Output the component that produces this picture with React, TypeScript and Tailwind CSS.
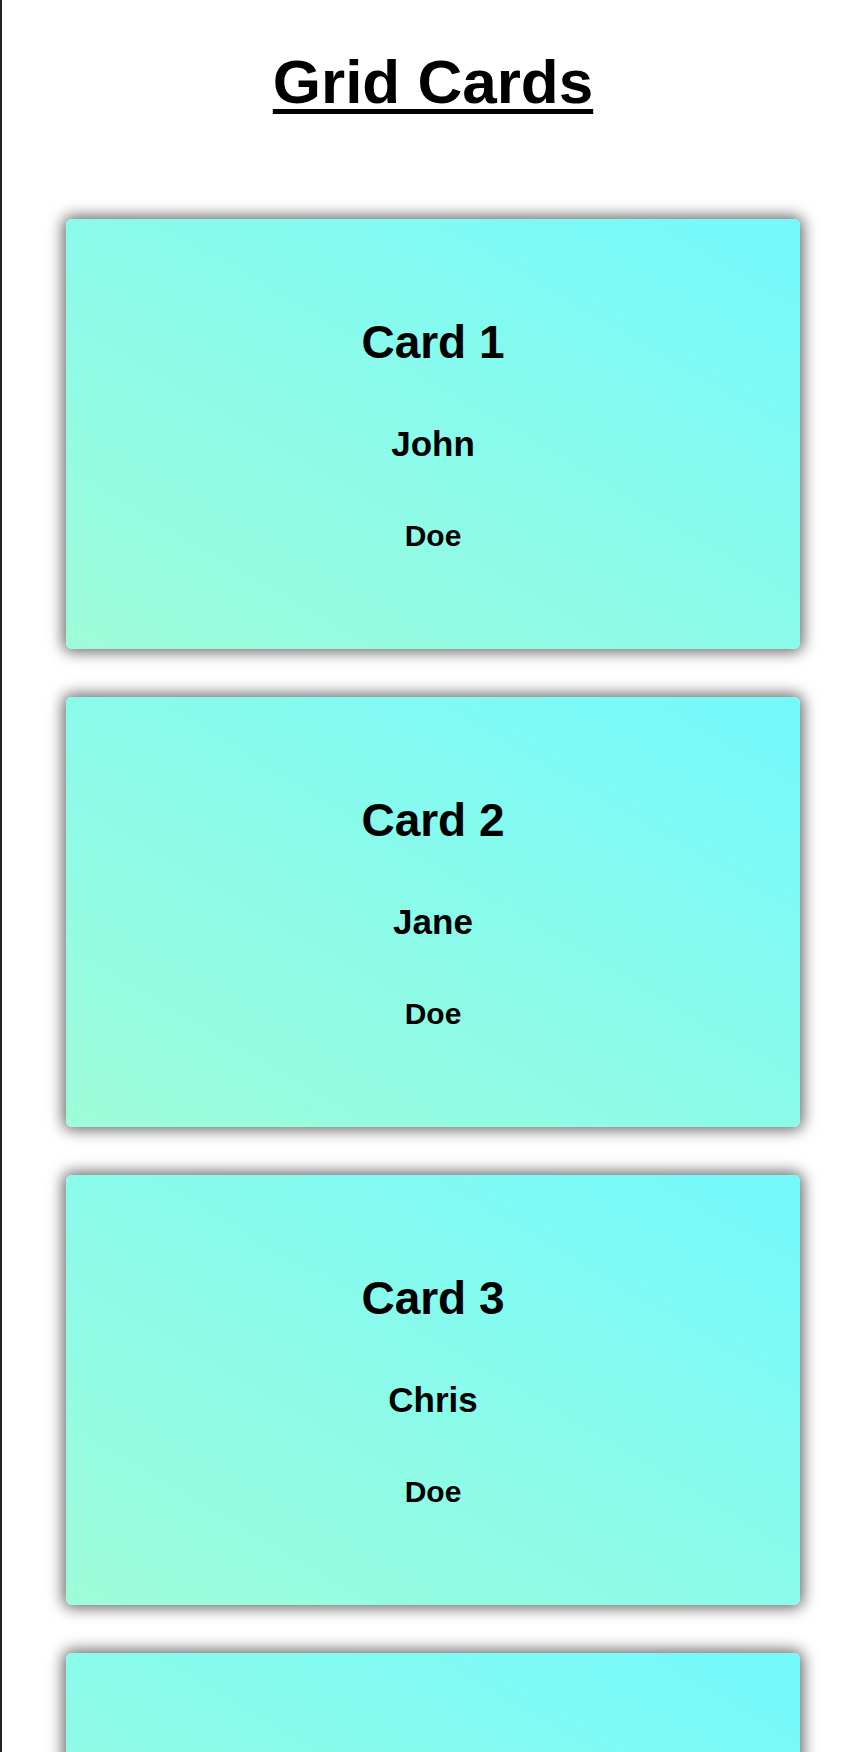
import React from "react";

const cards = [
  { title: "Card 1", first: "John", last: "Doe" },
  { title: "Card 2", first: "Jane", last: "Doe" },
  { title: "Card 3", first: "Chris", last: "Doe" },
  { title: "Card 4", first: "Sam", last: "Doe" },
];

export default function App() {
  return (
    <div
      className="min-h-screen border-l-2 border-[#222222] bg-white text-black"
      style={{ fontFamily: '"Liberation Sans", Arial, sans-serif' }}
    >
      <div className="ml-[64px] w-[734px] flex flex-col">
        <h1 className="mt-[51px] text-center text-[62px] leading-none font-bold underline decoration-[5px] underline-offset-[6px]">
          Grid Cards
        </h1>
        <div className="mt-[106px] flex flex-col gap-[48px] pb-[48px]">
          {cards.map((c) => (
            <div
              key={c.title}
              className="h-[430px] rounded-[6px] bg-linear-to-tr from-[#9efcd8] to-[#74f9fc] shadow-[0_0_15px_3px_rgba(0,0,0,0.6)] flex flex-col items-center pt-[100px]"
            >
              <h2 className="text-[46px] leading-none font-bold">{c.title}</h2>
              <h3 className="mt-[61px] text-[35px] leading-none font-bold">{c.first}</h3>
              <h4 className="mt-[60px] text-[30px] leading-none font-bold">{c.last}</h4>
            </div>
          ))}
        </div>
      </div>
    </div>
  );
}
